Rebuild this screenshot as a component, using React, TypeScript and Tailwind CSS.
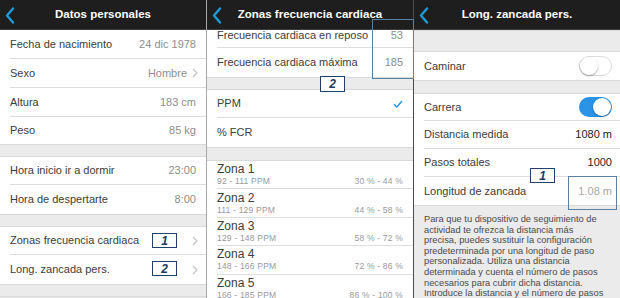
import type { ReactNode } from 'react';

const font = "font-['Liberation_Sans',Arial,sans-serif]";

function Header({ title }: { title: string }) {
  return (
    <div className="relative shrink-0 h-[30px] bg-[#1e1e1e] flex items-center justify-center border-b border-[#3c3c3c]">
      <svg className="absolute left-[4px] top-[7px]" width="12" height="17" viewBox="0 0 12 17">
        <path d="M9 1.5 L3 8.5 L9 15.5" stroke="#1f9ad8" strokeWidth="2.4" fill="none" strokeLinecap="round" strokeLinejoin="round" />
      </svg>
      <span className="text-white text-[11.5px] font-bold">{title}</span>
    </div>
  );
}

function Gap({ h }: { h: string }) {
  return <div className={`${h} shrink-0 bg-[#ebebeb] border-y border-[#dadada]`} />;
}

function Row({
  label, h = 'h-[29px]', pr = 'pr-[10px]', last, children, over,
}: { label: string; h?: string; pr?: string; last?: boolean; children?: ReactNode; over?: ReactNode }) {
  return (
    <div className={`relative shrink-0 ${h} pl-[10px] bg-white`}>
      <div className={`h-full flex items-center justify-between ${pr} ${last ? '' : 'border-b border-[#dedede]'}`}>
        <span className="text-[11px] text-[#3c3c3c] whitespace-nowrap">{label}</span>
        {children}
      </div>
      {over}
    </div>
  );
}

function Chevron() {
  return (
    <svg width="6" height="10" viewBox="0 0 6 10" className="ml-[5px]">
      <path d="M1 1 L5 5 L1 9" stroke="#c4c4c8" strokeWidth="1.2" fill="none" />
    </svg>
  );
}

function Badge({ n, className }: { n: string; className: string }) {
  return (
    <div className={`absolute w-[25px] h-[15px] bg-white border-[1.5px] border-[#23406a] flex items-center justify-center text-[12px] font-bold italic text-[#1d3a66] leading-none ${className}`}>
      {n}
    </div>
  );
}

function Value({ children, dark }: { children: ReactNode; dark?: boolean }) {
  return <span className={`text-[11px] ${dark ? 'text-[#222]' : 'text-[#8e8e8e]'}`}>{children}</span>;
}

function Toggle({ on }: { on?: boolean }) {
  return (
    <div className={`relative w-[33px] h-[20px] rounded-full ${on ? 'bg-[#2a93e6]' : 'bg-white border border-[#dcdcdc]'}`}>
      <div className={`absolute w-[18px] h-[18px] rounded-full bg-white shadow-[0_1px_2px_rgba(0,0,0,0.35)] ${on ? 'right-[1px] top-[1px]' : 'left-0 top-0'}`} />
    </div>
  );
}

const zonas = [
  ['Zona 1', '92 - 111 PPM', '30 % - 44 %'],
  ['Zona 2', '111 - 129 PPM', '44 % - 58 %'],
  ['Zona 3', '129 - 148 PPM', '58 % - 72 %'],
  ['Zona 4', '148 - 166 PPM', '72 % - 86 %'],
  ['Zona 5', '166 - 185 PPM', '86 % - 100 %'],
];

const parrafo = [
  'Para que tu dispositivo de seguimiento de',
  'actividad te ofrezca la distancia más',
  'precisa, puedes sustituir la configuración',
  'predeterminada por una longitud de paso',
  'personalizada. Utiliza una distancia',
  'determinada y cuenta el número de pasos',
  'necesarios para cubrir dicha distancia.',
  'Introduce la distancia y el número de pasos',
];

export default function App() {
  return (
    <div className={`flex w-[620px] h-[298px] overflow-hidden bg-[#ebebeb] ${font}`}>
      {/* Datos personales */}
      <div className="w-[207px] shrink-0 border-r border-[#a8a8a8] flex flex-col">
        <Header title="Datos personales" />
        <Row label="Fecha de nacimiento" h="h-[29px]"><Value>24 dic 1978</Value></Row>
        <Row label="Sexo" pr="pr-[8px]"><span className="flex items-center"><Value>Hombre</Value><Chevron /></span></Row>
        <Row label="Altura"><Value>183 cm</Value></Row>
        <Row label="Peso" h="h-[27px]" last><Value>85 kg</Value></Row>
        <Gap h="h-[13px]" />
        <Row label="Hora inicio ir a dormir" h="h-[28px]"><Value>23:00</Value></Row>
        <Row label="Hora de despertarte" last><Value>8:00</Value></Row>
        <Gap h="h-[13px]" />
        <Row label="Zonas frecuencia cardiaca" h="h-[28px]" pr="pr-[8px]" over={<Badge n="1" className="left-[152px] top-[6px]" />}>
          <Chevron />
        </Row>
        <Row label="Long. zancada pers." pr="pr-[8px]" last over={<Badge n="2" className="left-[152px] top-[6px]" />}>
          <Chevron />
        </Row>
        <Gap h="h-[13px]" />
      </div>

      {/* Zonas frecuencia cardiaca */}
      <div className="relative w-[207px] shrink-0 border-r border-[#4a4a4a] flex flex-col">
        <Header title="Zonas frecuencia cardiaca" />
        <div className="relative flex-1 overflow-hidden">
          <div className="-mt-[7px] flex flex-col">
            <Row label="Frecuencia cardiaca en reposo" h="h-[25px]"><Value>53</Value></Row>
            <Row label="Frecuencia cardiaca máxima" last><Value>185</Value></Row>
            <Gap h="h-[13px]" />
            <Row label="PPM" h="h-[28px]" pr="pr-[10px]">
              <svg width="10" height="8" viewBox="0 0 10 8">
                <path d="M1 4.2 L3.8 7 L9 1" stroke="#2a93e6" strokeWidth="1.4" fill="none" />
              </svg>
            </Row>
            <Row label="% FCR" last />
            <Gap h="h-[14px]" />
            {zonas.map(([z, ppm, pct]) => (
              <div key={z} className="shrink-0 h-[28.4px] pl-[10px] bg-white">
                <div className="h-full pr-[10px] border-b border-[#dedede] flex flex-col justify-center">
                  <div className="text-[12px] leading-[13px] text-[#3c3c3c]">{z}</div>
                  <div className="flex justify-between text-[8.5px] leading-[10px] text-[#9a9a9a] tracking-[0.2px]">
                    <span>{ppm}</span>
                    <span>{pct}</span>
                  </div>
                </div>
              </div>
            ))}
          </div>
        </div>
        <div className="absolute left-[165px] top-[19px] w-[42px] h-[60px] border-[1.5px] border-[#5a80a4]" />
        <Badge n="2" className="left-[113px] top-[76px] h-[16px]" />
      </div>

      {/* Long. zancada pers. */}
      <div className="relative flex-1 flex flex-col overflow-hidden">
        <Header title="Long. zancada pers." />
        <Gap h="h-[22px]" />
        <Row label="Caminar" h="h-[28px]" pr="pr-[8px]" last><Toggle /></Row>
        <Gap h="h-[14px]" />
        <Row label="Carrera" h="h-[27px]" pr="pr-[8px]"><Toggle on /></Row>
        <Row label="Distancia medida" h="h-[28px]" pr="pr-[8px]"><Value dark>1080 m</Value></Row>
        <Row label="Pasos totales" h="h-[28px]" pr="pr-[8px]"><Value dark>1000</Value></Row>
        <Row label="Longitud de zancada" h="h-[28px]" pr="pr-[8px]" last>
          <span className="text-[11px] text-[#a8a8a8]">1.08 m</span>
        </Row>
        <div className="shrink-0 bg-[#ebebeb] border-t border-[#dadada] pl-[10px] pt-[8px] text-[9.3px] leading-[10.6px] text-[#4a4a4a]">
          {parrafo.map(l => (
            <div key={l} className="whitespace-nowrap">{l}</div>
          ))}
        </div>
        <Badge n="1" className="left-[116px] top-[168px] h-[14px]" />
        <div className="absolute left-[154px] top-[176px] w-[49px] h-[34px] border-[1.5px] border-[#5a80a4]" />
      </div>
    </div>
  );
}
